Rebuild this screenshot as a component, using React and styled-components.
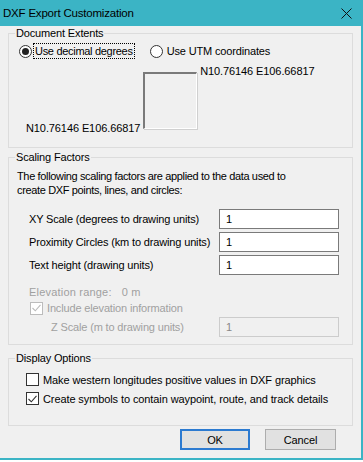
import React from "react";
import styled, { createGlobalStyle } from "styled-components";

const Global = createGlobalStyle`
  html, body { margin: 0; padding: 0; background: #ffffff; }
  body {
    font-family: "Liberation Sans", Arial, sans-serif;
    font-size: 11px;
    letter-spacing: -0.15px;
    color: #000;
  }
`;

const Window = styled.div`
  width: 363px;
  height: 460px;
  box-sizing: border-box;
  border-right: 2px solid #3bb4c5;
  border-bottom: 2px solid #3bb4c5;
  background: #f0f0f0;
  display: flex;
  flex-direction: column;
`;

const TitleBar = styled.div`
  height: 26px;
  flex: none;
  background: #3bb4c5;
  display: flex;
  align-items: center;
  justify-content: space-between;
  padding: 0 9px 0 3px;
  font-size: 11.5px;
  letter-spacing: -0.2px;
  color: #000;
`;

const Body = styled.div`
  flex: 1;
  display: flex;
  flex-direction: column;
  padding: 0 8px;
`;

const Group = styled.fieldset`
  margin: ${(p) => p.$top || 0}px 0 0 0;
  padding: ${(p) => p.$pad || "0"};
  border: 1px solid #dcdcdc;
  min-width: 0;
`;

const Legend = styled.legend`
  margin-left: 6px;
  padding: 0 1px;
  line-height: 15px;
`;

const RadioRow = styled.div`
  display: flex;
  align-items: center;
  padding-left: 10px;
  margin-top: 2px;
  height: 16px;
`;

const RadioItem = styled.label`
  display: flex;
  align-items: center;
  margin-right: ${(p) => p.$mr || 0}px;
`;

const RadioCircle = styled.span`
  width: 11px;
  height: 11px;
  border: 1px solid #333;
  border-radius: 50%;
  background: #fff;
  display: flex;
  align-items: center;
  justify-content: center;
  margin-right: ${(p) => p.$gap || 2}px;
  &::after {
    content: "";
    width: 7px;
    height: 7px;
    border-radius: 50%;
    background: ${(p) => (p.$on ? "#222" : "transparent")};
  }
`;

const Focus = styled.span`
  outline: 1px dotted #000;
  padding: 0 1px;
  line-height: 14px;
  letter-spacing: -0.3px;
`;

const Diagram = styled.div`
  display: flex;
  align-items: flex-start;
  padding-left: 17px;
  margin-top: 13px;
  margin-bottom: 18px;
`;

const Coord = styled.span`
  line-height: 14px;
  letter-spacing: -0.1px;
  align-self: ${(p) => (p.$bottom ? "flex-end" : "flex-start")};
  margin: ${(p) => (p.$bottom ? "0 3px -6px 0" : "-8px 0 0 3px")};
`;

const Extent = styled.div`
  width: 51px;
  height: 54px;
  border-top: 2px solid #7a7a7a;
  border-left: 2px solid #7a7a7a;
  border-right: 1px solid #ffffff;
  border-bottom: 1px solid #ffffff;
  box-shadow: 1px 1px 0 #d0d0d0;
`;

const Desc = styled.p`
  margin: 4px 0 0 8px;
  line-height: 14px;
  letter-spacing: -0.35px;
`;

const Grid = styled.div`
  display: grid;
  grid-template-columns: 190px 120px;
  row-gap: 3px;
  align-items: center;
  padding-left: 20px;
  margin-top: 12px;
  white-space: nowrap;
`;

const Input = styled.div`
  height: 20px;
  box-sizing: border-box;
  border: 1px solid ${(p) => (p.$disabled ? "#cccccc" : "#7a7a7a")};
  background: ${(p) => (p.$disabled ? "#f0f0f0" : "#ffffff")};
  color: ${(p) => (p.$disabled ? "#888" : "#000")};
  display: flex;
  align-items: center;
  padding-left: 6px;
`;

const Muted = styled.div`
  color: #a0a0a0;
  line-height: 14px;
  letter-spacing: 0.2px;
  padding-left: ${(p) => p.$indent || 0}px;
  margin-top: ${(p) => p.$top || 0}px;
`;

const Value = styled.span`
  margin-left: 10px;
`;

const Options = styled.div`
  display: flex;
  flex-direction: column;
  padding: 4px 0 17px 17px;
  letter-spacing: -0.1px;
`;

const CheckRow = styled.label`
  display: flex;
  align-items: center;
  height: ${(p) => p.$h || 19}px;
  padding-left: ${(p) => p.$indent || 0}px;
  color: ${(p) => (p.$disabled ? "#a0a0a0" : "#000")};
  white-space: nowrap;
`;

const Box = styled.span`
  width: 11px;
  height: 11px;
  border: 1px solid ${(p) => (p.$disabled ? "#bcbcbc" : "#333")};
  background: #fff;
  margin-right: 4px;
  display: flex;
  align-items: center;
  justify-content: center;
  flex: none;
`;

const ZRow = styled.div`
  display: grid;
  grid-template-columns: 168px 120px;
  align-items: center;
  padding-left: 42px;
  color: #a0a0a0;
`;

const Buttons = styled.div`
  display: flex;
  justify-content: flex-end;
  gap: 15px;
  margin-top: 3px;
  padding-right: 17px;
`;

const Button = styled.button`
  width: ${(p) => p.$w}px;
  height: 21px;
  box-sizing: border-box;
  background: #e1e1e1;
  border: ${(p) => (p.$primary ? "2px solid #2c7ad0" : "1px solid #adadad")};
  font-family: inherit;
  font-size: 11px;
  letter-spacing: inherit;
  color: #000;
  padding: 0;
`;

const Check = ({ on, disabled }) => (
  <Box $disabled={disabled}>
    {on && (
      <svg width="9" height="8" viewBox="0 0 9 8">
        <path d="M0.5 4 L3.3 6.8 L8.5 0.8" fill="none" stroke={disabled ? "#bcbcbc" : "#333"} strokeWidth="1.1" />
      </svg>
    )}
  </Box>
);

export default function App() {
  return (
    <>
      <Global />
      <Window>
        <TitleBar>
          <span>DXF Export Customization</span>
          <svg width="11" height="11" viewBox="0 0 11 11">
            <path d="M0.5 0.5 L10.5 10.5 M10.5 0.5 L0.5 10.5" stroke="#111" strokeWidth="1" />
          </svg>
        </TitleBar>
        <Body>
          <Group>
            <Legend>Document Extents</Legend>
            <RadioRow>
              <RadioItem $mr={16}>
                <RadioCircle $on />
                <Focus>Use decimal degrees</Focus>
              </RadioItem>
              <RadioItem>
                <RadioCircle $gap={4} />
                Use UTM coordinates
              </RadioItem>
            </RadioRow>
            <Diagram>
              <Coord $bottom>N10.76146 E106.66817</Coord>
              <Extent />
              <Coord>N10.76146 E106.66817</Coord>
            </Diagram>
          </Group>

          <Group $top={2} $pad="0 0 7px 0">
            <Legend>Scaling Factors</Legend>
            <Desc>
              The following scaling factors are applied to the data used to
              <br />
              create DXF points, lines, and circles:
            </Desc>
            <Grid>
              <span>XY Scale (degrees to drawing units)</span>
              <Input>1</Input>
              <span>Proximity Circles (km to drawing units)</span>
              <Input>1</Input>
              <span>Text height (drawing units)</span>
              <Input>1</Input>
            </Grid>
            <Muted $indent={20} $top={10}>
              Elevation range:<Value>0 m</Value>
            </Muted>
            <CheckRow $indent={21} $h={18} $disabled>
              <Check on disabled />
              Include elevation information
            </CheckRow>
            <ZRow>
              <span>Z Scale (m to drawing units)</span>
              <Input $disabled>1</Input>
            </ZRow>
          </Group>

          <Group $top={6}>
            <Legend>Display Options</Legend>
            <Options>
              <CheckRow>
                <Check />
                Make western longitudes positive values in DXF graphics
              </CheckRow>
              <CheckRow>
                <Check on />
                Create symbols to contain waypoint, route, and track details
              </CheckRow>
            </Options>
          </Group>

          <Buttons>
            <Button $primary $w={70}>OK</Button>
            <Button $w={71}>Cancel</Button>
          </Buttons>
        </Body>
      </Window>
    </>
  );
}
